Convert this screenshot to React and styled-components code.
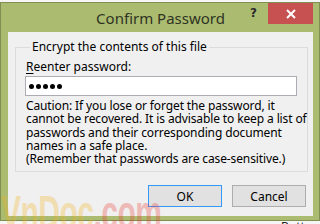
import React from "react";
import styled, { createGlobalStyle } from "styled-components";

const Global = createGlobalStyle`
  html, body { margin: 0; padding: 0; background: #f6f6f6; }
  body { width: 320px; height: 224px; overflow: hidden; font-family: "Noto Sans", "Open Sans", sans-serif; }
`;

const Desktop = styled.div`
  position: relative;
  width: 320px;
  height: 224px;
  overflow: hidden;
  padding-top: 2px;
  box-sizing: border-box;
`;

const PeekText = styled.div`
  position: absolute;
  left: ${(p) => p.$x}px;
  top: ${(p) => p.$y}px;
  font-size: 12px;
  color: #222;
  line-height: 14px;
`;

const Window = styled.div`
  width: 320px;
  box-sizing: border-box;
  border: 1px solid #7f8f52;
  background: #abbc70;
  padding: 0 6px 4px 7px;
  display: flex;
  flex-direction: column;
`;

const TitleBar = styled.div`
  height: 29px;
  display: grid;
  grid-template-columns: 1fr auto 1fr;
  align-items: center;
`;

const Title = styled.div`
  grid-column: 2;
  font-size: 15px;
  color: #2f3324;
  padding-top: 1px;
`;

const Controls = styled.div`
  grid-column: 3;
  justify-self: end;
  align-self: start;
  display: flex;
  align-items: center;
  gap: 11px;
`;

const Help = styled.span`
  font-family: "DejaVu Sans", sans-serif;
  font-weight: bold;
  font-size: 12px;
  color: #2b2b2b;
  margin-top: -1px;
`;

const Close = styled.div`
  width: 45px;
  height: 21px;
  background: #c75050;
  display: flex;
  align-items: center;
  justify-content: center;
`;

const Client = styled.div`
  background: #f0f0f0;
  height: 184px;
  box-sizing: border-box;
  padding: 7px 5px 0 7px;
  display: flex;
  flex-direction: column;
  color: #000;
  font-size: 12px;
`;

const Group = styled.fieldset`
  margin: 0;
  padding: 4px 10px 6px 9px;
  border: 1px solid #dcdcdc;
  min-width: 0;
`;

const Legend = styled.legend`
  padding: 0 2px;
  margin-left: 5px;
  line-height: 16px;
`;

const Label = styled.div`
  line-height: 16px;
  margin-left: 1px;
  u { text-decoration-thickness: 1px; text-underline-offset: 2px; }
`;

const Input = styled.div`
  margin-top: 1px;
  height: 20px;
  box-sizing: border-box;
  border: 1px solid #abadb3;
  background: #fff;
  display: flex;
  align-items: center;
  padding-left: 3px;
  gap: 2px;
`;

const Dot = styled.span`
  width: 5px;
  height: 5px;
  border-radius: 50%;
  background: #000;
`;

const Caution = styled.div`
  margin-top: 3px;
  margin-left: 1px;
  line-height: 13.3px;
  letter-spacing: -0.12px;
  white-space: nowrap;
`;

const Buttons = styled.div`
  margin-top: 13px;
  display: flex;
  justify-content: flex-end;
  gap: 10px;
  padding-right: 2px;
`;

const Button = styled.div`
  width: 74px;
  height: 22px;
  box-sizing: border-box;
  border: 1px solid ${(p) => (p.$default ? "#3399ff" : "#adadad")};
  background: #e1e1e1;
  display: flex;
  align-items: center;
  justify-content: center;
  font-size: 12px;
`;

const Watermark = styled.div`
  position: absolute;
  left: 1px;
  top: 186px;
  font-family: "Liberation Sans", sans-serif;
  font-weight: bold;
  font-size: 30px;
  letter-spacing: -0.5px;
  transform: scaleY(1.6);
  transform-origin: top left;
  opacity: 0.3;
  white-space: nowrap;
  span:first-child { color: #f2b21f; }
  span:last-child { color: #e8403a; }
`;

export default function App() {
  return (
    <>
      <Global />
      <Desktop>
        <PeekText $x={284} $y={-11}>one</PeekText>
        <PeekText $x={281} $y={220}>Button</PeekText>
        <Window>
          <TitleBar>
            <Title>Confirm Password</Title>
            <Controls>
              <Help>?</Help>
              <Close>
                <svg width="10" height="10" viewBox="0 0 10 10">
                  <path d="M1 1L9 9M9 1L1 9" stroke="#fff" strokeWidth="2" />
                </svg>
              </Close>
            </Controls>
          </TitleBar>
          <Client>
            <Group>
              <Legend>Encrypt the contents of this file</Legend>
              <Label>
                <u>R</u>eenter password:
              </Label>
              <Input>
                <Dot />
                <Dot />
                <Dot />
                <Dot />
                <Dot />
              </Input>
              <Caution>
                Caution: If you lose or forget the password, it
                <br />
                cannot be recovered. It is advisable to keep a list of
                <br />
                passwords and their corresponding document
                <br />
                names in a safe place.
                <br />
                (Remember that passwords are case-sensitive.)
              </Caution>
            </Group>
            <Buttons>
              <Button $default>OK</Button>
              <Button>Cancel</Button>
            </Buttons>
          </Client>
        </Window>
        <Watermark>
          <span>VnDoc</span>
          <span>.com</span>
        </Watermark>
      </Desktop>
    </>
  );
}
